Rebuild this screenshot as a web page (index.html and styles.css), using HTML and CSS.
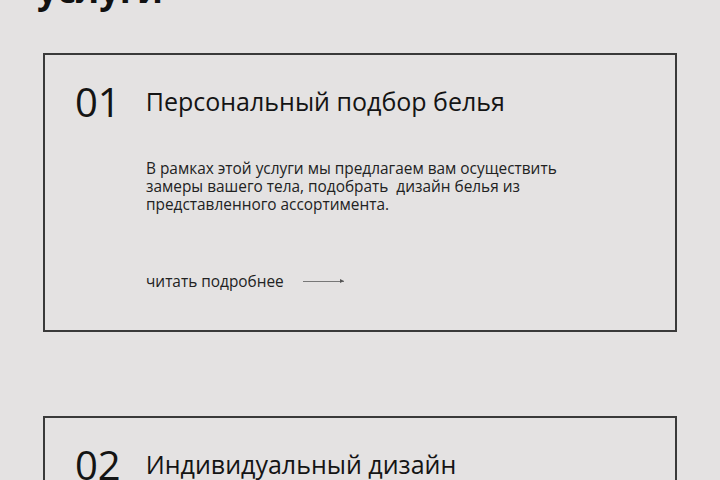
FILE: index.html
```html
<!DOCTYPE html>
<html lang="ru">
<head>
    <meta charset="UTF-8">
    <title>Услуги</title>
    <link rel="stylesheet" href="styles.css">
</head>
<body>
    <section class="services">
        <h1 class="services-title">услуги</h1>

        <div class="service-card">
            <div class="service-head">
                <span class="service-num">01</span>
                <h2 class="service-name">Персональный подбор белья</h2>
            </div>
            <p class="service-text">В рамках этой услуги мы предлагаем вам осуществить замеры вашего тела, подобрать&nbsp; дизайн белья из представленного ассортимента.</p>
            <a class="service-more" href="#">читать подробнее <span class="arrow"></span></a>
        </div>

        <div class="service-card">
            <div class="service-head">
                <span class="service-num">02</span>
                <h2 class="service-name">Индивидуальный дизайн</h2>
            </div>
            <p class="service-text">Мы создадим для вас уникальный комплект белья по вашим эскизам и пожеланиям.</p>
            <a class="service-more" href="#">читать подробнее <span class="arrow"></span></a>
        </div>
    </section>
</body>
</html>
```

FILE: styles.css
```css
body {
    margin: 0;
    background: #e4e2e2;
    font-family: "Open Sans", "Noto Sans", sans-serif;
    color: #141414;
}

.services {
    padding: 0 43px;
}

.services-title {
    margin: -28px 0 0 -6px;
    font-size: 36px;
    line-height: 36px;
    font-weight: 700;
    height: 36px;
    color: #111;
}

.service-card {
    box-sizing: border-box;
    height: 279px;
    margin-top: 45px;
    margin-bottom: 84px;
    border: 2px solid #3a3a3a;
    padding: 23px 30px 0 30px;
}

.service-card + .service-card {
    margin-top: 0;
}

.service-head {
    display: flex;
    align-items: center;
    gap: 25px;
    height: 48px;
}

.service-num {
    font-size: 40px;
    font-weight: 400;
    line-height: 48px;
}

.service-name {
    margin: 0;
    font-size: 25px;
    font-weight: 400;
    line-height: 40px;
    padding-bottom: 2px;
}

.service-text {
    margin: 34px 0 0 71px;
    width: 440px;
    font-size: 15.4px;
    line-height: 18px;
    color: #222;
}

.service-more {
    display: flex;
    align-items: center;
    gap: 19px;
    margin: 57px 0 0 71px;
    font-size: 15.4px;
    color: #222;
    text-decoration: none;
}

.arrow {
    position: relative;
    width: 41px;
    height: 1px;
    background: #777;
}

.arrow::after {
    content: "";
    position: absolute;
    right: 0;
    top: -2px;
    border-left: 4px solid #555;
    border-top: 2.5px solid transparent;
    border-bottom: 2.5px solid transparent;
}
```
